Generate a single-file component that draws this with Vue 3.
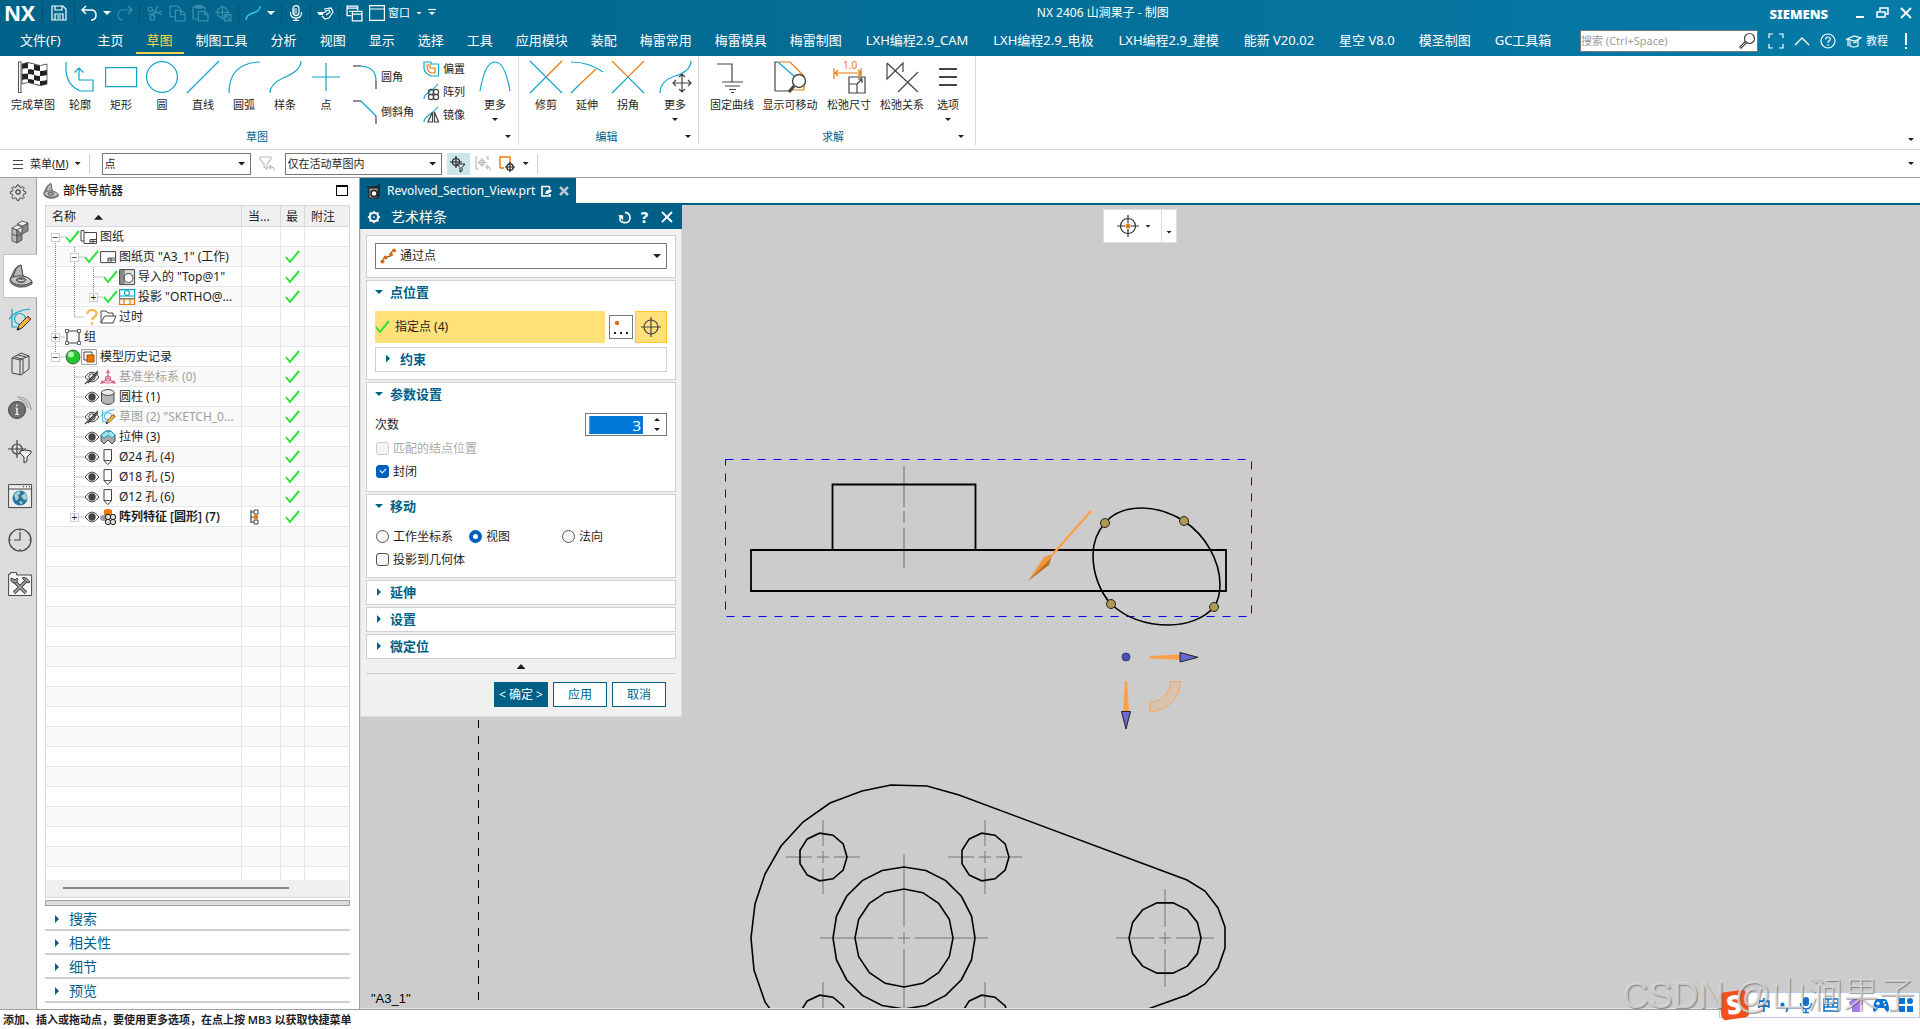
<script setup>
import { h, ref } from 'vue'

const K = '#444'
const C = '#0ea5cb'
const O = '#eb780a'
const s = (c, w = 1.2) => `fill="none" stroke="${c}" stroke-width="${w}"`

const icons = {
  save: `<g ${s('#fff', 1.2)}><path d="M1 1h11l3 3v11H1z"/><path d="M4 1v4h7V1M4 15V9h8v6M6 11h4M6 13h4"/></g>`,
  undo: `<path d="M5 1L1 5l4 4M1 5h9q5 0 5 5t-5 5" ${s('#fff', 1.5)}/>`,
  redo: `<path d="M11 1l4 4-4 4M15 5H6q-5 0-5 5t5 5" ${s('#3a8eae')}/>`,
  cut: `<g ${s('#3a8eae')}><circle cx="4" cy="4" r="2"/><circle cx="6" cy="12" r="2.2"/><path d="M6 5l9 4M15 6L2 9M7 10l4-9"/></g>`,
  copy: `<g ${s('#3a8eae')}><path d="M5 11H1V1h7l3 3"/><path d="M6 5h5l4 3v7H6zM11 5v4h4"/></g>`,
  paste: `<g ${s('#3a8eae')}><path d="M5 13H1V2h11v3M4 2V.7h5V3H4zM6 6h6l3 3v6H6zM12 6v3h3"/></g>`,
  target: `<g ${s('#3a8eae')}><circle cx="7" cy="7" r="5"/><path d="M7 0v14M0 7h14M9 9h6v6H9zM11 11l3 3"/></g>`,
  curve: `<path d="M1 15q0-5 7-7t7-7" ${s('#35c5ee', 1.4)}/>`,
  mic: `<g ${s('#fff')}><rect x="5" y=".6" width="6" height="10" rx="3"/><path d="M2.500 7v1q0 5 5.500 5t5.500-5V7M8 13v2.500M5 15.400h6M5 4h4M5 6h4M5 8h4"/></g>`,
  touch: `<g ${s('#fff')}><path d="M7 4l7-1 2 4-4 6-4 1-3-3M8 6l4-1 1 2-4 3M6 8l4-2"/></g><path d="M0 7h6v3H2z" fill="#fff"/>`,
  wins: `<g ${s('#fff')}><path d="M5 10H1V1h10v4M1 3h10"/><path d="M6 6h9v9H6zM6 8.500h9"/><path d="M3 6h2"/></g>`,
  win: `<path d="M.6.6h14.800v14.800H.6zM.6 4h14.800" ${s('#fff')}/>`,
  caretLine: `<path d="M0 .5h8" ${s('#fff')}/><path d="M1 3h6L4 6z" fill="#fff"/>`,
  restore: `<path d="M4 4V1h8v6H9M1 5h8v5H1zM1 5h8" ${s('#fff', 1.5)}/>`,
  close: `<path d="M1 1l10 10M11 1L1 11" ${s('#fff', 1.8)}/>`,
  full: `<path d="M1 5V1h4M11 1h4v4M15 11v4h-4M5 15H1v-4" ${s('#fff')}/>`,
  up: `<path d="M1 12l7-7 7 7" ${s('#fff', 1.4)}/>`,
  help: `<circle cx="8" cy="8" r="7" ${s('#fff')}/><path d="M5.700 6.500q0-2.500 2.300-2.500t2.300 2q0 1.200-1.300 1.900T8 10M8 11.300v1.400" ${s('#fff')}/>`,
  tutor: `<g ${s('#fff')}><path d="M1 6l7-3 7 2-6 3zM4 8v5q4 2 8 0V7M2 6v7M7 10l4-1"/></g>`,
  mag: `<circle cx="10.500" cy="5.500" r="5" ${s(K)}/><path d="M7 9l-6 6" ${s(K, 3)}/><path d="M6.500 9.500L1.500 14.500" ${s('#ddd', 1)}/>`,
  flag: `<path d="M1.500 1v31M4 1v31M1 1h3.500M1 31.500h3.500" ${s('#555', 1)}/><path d="M5 3q6-3 12 0t13 0v20q-7 3-13 0T5 23z" fill="#222"/><path d="M11 2q3 0 6 1v6q-3-1-6-1zM23 4q4 1 7-1v6q-4 1-7 1zM5 8q3-1 6-.5v5q-3 0-6 .5zM17 9q3 1 6 1v5q-3 0-6-1zM11 13q3 0 6 1v5q-3-1-6-1zM23 15q4 0 7-1v5q-3 1-7 1zM5 19q3-1 6-.5v4q-3 0-6 .5zM17 19q3 1 6 1v4q-3 0-6-1z" fill="#fff"/><path d="M5 3q6-3 12 0t13 0v20q-7 3-13 0T5 23z" ${s('#444', 0.8)}/>`,
  profile: `<path d="M2 1v9q1 14 14 20h13V19H15V7M10.500 11.500L15 7l4.500 4.500" ${s(C)}/>`,
  rect: `<path d="M.6 6.600h31v19H.6z" ${s(C)}/>`,
  circle: `<circle cx="16" cy="16" r="15.400" ${s(C)}/>`,
  line: `<path d="M0 32L32 0" ${s(C)}/>`,
  arc: `<path d="M1 32Q1 2 32 1" ${s(C)}/>`,
  spline: `<path d="M1 32q0-9 13-15 18-7 18-17" ${s(C)}/>`,
  point: `<path d="M16 2v28M2 16h28" ${s(C)}/>`,
  fillet: `<path d="M0 1h8" ${s(K)}/><path d="M8 1q15 1 15 15" ${s(C)}/><path d="M23 16v8" ${s(K)}/>`,
  chamfer: `<path d="M0 1h8" ${s(K)}/><path d="M8 1l15 15" ${s(C)}/><path d="M23 16v8" ${s(K)}/>`,
  offset: `<path d="M1 1h7v2h7.500v12H8Q1 12 1 7z" ${s(C)}/><path d="M4 4h3v3h5v5H8Q4 10 4 4z" ${s(O)}/>`,
  array: `<path d="M1 15Q1 11 6 8t9-8" ${s(C)}/><g ${s(K)}><circle cx="8" cy="8" r="2.600"/><circle cx="13" cy="8" r="2.600"/><circle cx="8" cy="13" r="2.600"/><circle cx="13" cy="13" r="2.600"/></g>`,
  mirror: `<path d="M1 15Q1 11 6 8t9-8" ${s(C)}/><path d="M9.500 5v10H5zM11.500 5v10h4z" ${s(K)}/>`,
  more: `<path d="M1 30Q6 1 16 1t15 29" ${s(C)}/>`,
  trim: `<path d="M0 0l32 32M0 32l16-16" ${s(C)}/><path d="M16 16L32 0" ${s(O)}/>`,
  extend: `<path d="M0 1q18 0 32 10M0 32l8-8" ${s(C)}/><path d="M8 24L25 8" ${s(O)}/>`,
  corner: `<path d="M0 32l16-16 16 16" ${s(C)}/><path d="M0 0l16 16L32 0" ${s(O)}/>`,
  moveCurve: `<path d="M1 32q0-12 15-17Q32 10 32 0" ${s(C)}/><path d="M23 13v18M14 22h18M20 16l3-3 3 3M20 28l3 3 3-3M17 19l-3 3 3 3M29 19l3 3-3 3" ${s(K)}/>`,
  ground: `<path d="M1 3h15v18M6 21h21M9 25h15M13 28.500h7M15 31.500h3" ${s(K)}/>`,
  movable: `<path d="M1 30V1h3M1 30h16" ${s(K)}/><path d="M4 1l17 15" ${s(C)}/><path d="M5 1h11l14 14v14H18" ${s(O)}/><circle cx="25" cy="20" r="6.500" fill="#fff" stroke="${K}" stroke-width="1.400"/><path d="M20 25l-5 6" ${s(K, 3)}/>`,
  relaxDim: `<path d="M1 7v11M28 7v11M2 12h26M5 9l-3 3 3 3M25 9l3 3-3 3" ${s(O)}/><path d="M16 16h16v16H16zM16 23h8v9M24 23l5-5M25 18h4v4" ${s(K)}/>`,
  relaxRel: `<path d="M1 2v16L17 2v9M1 2l31 29M12 31L32 11" ${s(K)}/>`,
  options: `<path d="M7 8h18M7 16h18M7 24h18" ${s(K, 2)}/>`,
  menu: `<path d="M1 2.500h10M1 6.500h10M1 10.500h10" ${s(K)}/>`,
  funnel: `<path d="M1 1h11v2L8 8v5l-3-2V8L1 3z M15 15q1-5-5-4M12 9l-2 2 2 2" ${s('#bbb')}/>`,
  crossFun: `<path d="M6 0v12M0 6h12" ${s('#222')}/><circle cx="6" cy="6" r="3.500" ${s('#222')}/><path d="M7 8h8l-3 3.500V15l-2 1v-4.500z" fill="#cde5ea" stroke="#222"/>`,
  brCross: `<path d="M3 1H1v12h3M11 1h2v3M7 2v9M2.500 6.500h9M15 15q1-5-4-4M13 9l-2 2 2 2" ${s('#bbb')}/><circle cx="7" cy="6.500" r="2.500" ${s('#bbb')}/>`,
  boxCross: `<path d="M1 12V1h10v6M1 12h4" ${s(O, 1.4)}/><circle cx="11" cy="11" r="3.200" ${s('#222', 1.3)}/><path d="M11 6v10M6 11h10" ${s('#222')}/>`,
  gear: `<circle cx="8" cy="8" r="2.200" ${s(K)}/><path d="M7 1h2l.5 2 1.500.6 1.800-1.100 1.400 1.400-1.100 1.800.6 1.500 2 .5v2l-2 .5-.6 1.500 1.100 1.800-1.400 1.400-1.800-1.100-1.500.6-.5 2H7l-.5-2-1.500-.6-1.800 1.100-1.400-1.400 1.100-1.800-.6-1.500-2-.5v-2l2-.5.600-1.500-1.100-1.800 1.400-1.400L5 3.600 6.500 3z" ${s(K, 1)}/>`,
  cubes: `<g stroke="${K}" stroke-width=".8"><path d="M4 8l5-3 5 2-5 3z" fill="#eee"/><path d="M9 4l5-3 6 2-5 3z" fill="#eee"/><path d="M4 8v13l5 2V10z" fill="#bbb"/><path d="M9 10v13l5-3V7l6-4v8l-6 3z" fill="#888"/><path d="M4 14l5 2 5-2" fill="none"/></g>`,
  part: `<g stroke="#444" stroke-width=".9"><path d="M2 13l4-8q3-4 6-4l2 11q8 2 9 6v2q-6 4-13 3-9-2-9-7z" fill="#8a8a8a"/><path d="M4 12l3-7q3-4 5-4l2 11q-3 2-10 0z" fill="#b4b4b4"/><path d="M1 15q5-4 13-3 8 2 9 6-6 4-12 3-8-1-10-6z" fill="#c6c6c6"/><ellipse cx="12" cy="16" rx="4.500" ry="2.300" fill="#777"/><path d="M9 16q3 1.500 6.500 0" stroke="#eee" fill="none"/></g>`,
  sketch: `<path d="M1 11Q8 2 22 1M4 1v18h5" ${s(C)}/><circle cx="12" cy="11" r="5.500" ${s(C)}/><path d="M9 22l2-5L20 8l3 3-9 9z" fill="#f5b93a" stroke="#333" stroke-width="1"/><path d="M18.500 9.500L20 8l3 3-1.500 1.500z" fill="#d5705b"/><path d="M9 22.500l1-3 2 2z" fill="#111"/>`,
  books: `<g ${s(K, 1)}><path d="M4 6l9-5 8 3v13l-8 6-9-2zM4 6l8 2 9-4M12 8v15M15 7v14M7 5l7 2M10 3l8 2" fill="#ddd"/></g>`,
  info: `<circle cx="9" cy="14" r="8.500" fill="#707070" stroke="#444"/><path d="M9 12v6M9 8.500v1.800" ${s('#eee', 1.600)}/><path d="M7.500 12H9M7 18.500h4" ${s('#eee', 1)}/><path d="M11 3q8 1 9 9M9 1q13 0 14 13M12 5.500q5 1 6 6" ${s('#999')}/>`,
  crossFunBig: `<path d="M9 0v18M0 9h18" ${s(K)}/><circle cx="9" cy="9" r="5" ${s(K)}/><path d="M12 11q5-2 11 0v2l-4 4v4l-3 2v-6l-4-4z" fill="#eee" stroke="#333"/>`,
  web: `<path d="M.6.6h23v23H.6z" fill="#eee" stroke="${K}"/><path d="M.6 5h23M15 2.700h1M18 2.700h1M21 2.700h1" ${s(K)}/><circle cx="12" cy="14" r="7.500" fill="#27769a"/><path d="M6 11q3-4 6-4 1 3-2 4l1 3-3 3zM13 12l4-3q3 4 2 6l-3 1zM11 17l4 1-2 3z" fill="#a9cfdd"/>`,
  clock: `<circle cx="12" cy="12" r="11" ${s(K)}/><path d="M12 4v8H6M12 1v2M12 21v2M1 12h2M21 12h2" ${s(K)}/>`,
  tools: `<path d="M.6 2h2V.6h6V3h15v20.500H.6z" fill="#f8f8f8" stroke="${K}"/><path d="M5 8l13 13M18 9L6 21" ${s('#444', 3.500)}/><path d="M5 8l13 13M18 9L6 21" ${s('#aaa', 1.500)}/><path d="M3 6q-1 5 4 5 4-1 2-5l-2 2-2-1zM14 6q4-2 8 4l-2 1-4-3z" fill="#999" stroke="#444"/>`,
  sheets: `<path d="M3 3V1.600H0V12h3" ${s(K, 1)}/><path d="M3 3.500h12.500v11H3z" fill="#fff" stroke="${K}"/><path d="M9 14v-3.500h6M12 10.500V14M9 12.500h6" ${s(K, 1)}/>`,
  sheet: `<path d="M.6 2.600h15v11H.6z" fill="#fff" stroke="${K}"/><path d="M8 13v-4h7M11 9v4M8 11h7" ${s(K, 1)}/>`,
  imported: `<path d="M.6.6h15v15H.6z" fill="#ddd" stroke="${K}"/><path d="M1 1h3v14H1z" fill="#888"/><circle cx="9.500" cy="9" r="4.500" fill="#fff" stroke="${K}"/><path d="M5 1v14" ${s(K, 1)}/>`,
  proj: `<path d="M.6.6h15v9H.6zM1 7h14" ${s(C)}/><circle cx="8" cy="4" r="2.500" ${s(C)}/><path d="M.6 10h15v5.500H.6zM5 10v5M11 10v5" ${s(O)}/>`,
  folder: `<path d="M1 14V2h5l2 2h5v3M1 14L4.500 7H16l-3 7z" fill="#fff" stroke="${K}"/>`,
  group: `<path d="M2 2h12v12H2z" ${s(K)}/><g fill="#fff" stroke="${K}" stroke-width=".8"><path d="M.5.5h3v3h-3zM12.500.5h3v3h-3zM.5 12.500h3v3h-3zM12.500 12.500h3v3h-3z"/></g>`,
  history: `<path d="M.6.6h14.800v14.800H.6z" ${s('#999', 1)}/><path d="M3 3h8v8H3z" fill="#fff" stroke="${K}"/><path d="M6 6h7v7H6z" fill="${O}" stroke="#a04a00"/>`,
  csys: `<g ${s('#d4688c', 1.2)}><path d="M8 3v6L3 13M8 9l5 4M3 13q5 2 10 0"/><circle cx="8" cy="9.500" r="2.500"/></g><g fill="#d4688c"><path d="M6 4l2-4 2 4zM0 15l2-4 3 3zM16 15l-2-4-3 3z"/></g>`,
  cyl: `<path d="M1.500 3.500v9q2 3 6.500 3t6-3v-9z" fill="#b5b5b5" stroke="${K}"/><ellipse cx="7.800" cy="3.500" rx="6.300" ry="2.900" fill="#eee" stroke="${K}"/>`,
  extrude: `<path d="M1 6l5-4h5l4 4v6l-3 3-4-4-4 4-3-3z" fill="#a9a9a9" stroke="${K}"/><path d="M1 6l5-4 2 1 3-1 4 4-3 3-4-3-4 3z" fill="#a5e0ea" stroke="${C}"/>`,
  hole: `<path d="M4 .6h7.500v11H4zM4 11.600l3.800 4 3.700-4" fill="#fff" stroke="${K}"/>`,
  pattern: `<path d="M4 1q4-2 8 0v6H4z" fill="${O}"/><ellipse cx="4" cy="9" rx="4" ry="3" fill="#999"/><g fill="#ddd" stroke="#222"><circle cx="8" cy="8" r="2.700"/><circle cx="13" cy="8" r="2.700"/><circle cx="8" cy="13" r="2.700"/><circle cx="13" cy="13" r="2.700"/></g>`,
  chain: `<path d="M1 1v13M1 3h3M1 8h3M1 13h3" ${s(K)}/><path d="M4 1h4v4H4zM4 11h4v4H4z" fill="#fff" stroke="${K}"/><path d="M4 6h4v4H4z" fill="${O}"/>`,
  check: `<path d="M1 8l4 5L14 2" ${s('#2fe13a', 2)}/>`,
  ask: `<path d="M3.500 5q0-4 4.500-4t4.500 3.500q0 2-2 3.200T8 11M8 13v2.500" ${s('#fbb04c', 2.200)}/>`,
  ball: `<circle cx="8" cy="8" r="7" fill="#20c52c" stroke="#444" stroke-width=".8"/><circle cx="6" cy="5.500" r="3" fill="#a8f5a8"/>`,
  eye: `<path d="M1 8q7-10 14 0-7 10-14 0z" fill="#fff" stroke="${K}"/><circle cx="8" cy="8" r="3.700" fill="#444"/>`,
  eyeOff: `<path d="M1 8q7-10 14 0-7 10-14 0z" ${s(K, 1)}/><circle cx="8" cy="8" r="3.200" ${s(K, 1)}/><path d="M1 15L14 2M4 14l10-10" ${s(K)}/>`,
  tabIcon: `<path d="M2 4h9v10H2z" fill="#9a9a9a" stroke="#222"/><circle cx="7" cy="9.500" r="3" fill="#fff" stroke="#222" stroke-width="1.500"/><path d="M0 3h9l3-2v10l-2 3" ${s('#222', 1.500)}/>`,
  edit: `<path d="M6 1.500H1v9.500h8V9M3 1.500h5l1 2" ${s('#fff', 1.700)}/><path d="M4 9l1-3 4-2 2 2-4 3z" fill="#fff"/>`,
  tabClose: `<path d="M1 1l8 8M9 1L1 9" ${s('#b9c7ce', 2.500)}/>`,
  gearWhite: `<circle cx="8" cy="8" r="4.800" ${s('#fff', 2.400)}/><circle cx="8" cy="8" r="1" fill="#fff"/><path d="M8 1v2M8 13v2M1 8h2M13 8h2M3 3l1.500 1.500M11.500 11.500L13 13M13 3l-1.500 1.500M3 13l1.500-1.500" ${s('#fff', 2)}/>`,
  reset: `<path d="M3 4.500Q0 12 6.500 12.500T13 7Q12.500 2 7.500 1.500" ${s('#fff', 1.700)}/><path d="M0 4.500h5.500V10z" fill="#fff"/>`,
  through: `<path d="M2 14Q3 9 7 9t4-3 3-4" ${s(K, 1)}/><g fill="#dd6c10"><circle cx="2.500" cy="13.500" r="2"/><circle cx="5.500" cy="9.500" r="2"/><circle cx="11" cy="6.500" r="2"/><circle cx="14" cy="2.500" r="2"/></g>`,
  dots: `<circle cx="7" cy="7" r="2.200" fill="#dd6c10"/><path d="M4 17h2M10 17h2M16 17h2" ${s('#222', 2)}/>`,
  cross: `<circle cx="11" cy="11" r="7" ${s(K)}/><path d="M11 1v20M1 11h20" ${s(K)}/>`,
  snap: `<circle cx="11" cy="11" r="7.500" ${s('#333', 1.2)}/><path d="M11 0v8M11 14v8M0 11h8M14 11h8" ${s('#333', 1.2)}/><circle cx="11" cy="11" r="2.500" fill="${O}"/>`,
  imeMic: `<rect x="5" y="0" width="6" height="9" rx="3" fill="#0b74d1"/><path d="M2.500 6q0 6 5.500 6t5.500-6M8 12v4M5 15.500h6" ${s('#0b74d1', 1.600)}/>`,
  imeKey: `<path d="M1 2h14v12H1zM1 6h14M1 10h14M5 2v8M10 2v8" ${s('#0b74d1', 1.600)}/>`,
  imeShirt: `<path d="M1 5l4-3h6l4 3-1 4-2-1v7H4V8L2 9z" fill="#a77bf0"/><circle cx="13" cy="2.500" r="2.500" fill="#f0543a"/>`,
  imeGame: `<path d="M4 2h8q3 1 4 9 0 4-2 4l-3-4H5l-3 4q-2 0-2-4 1-8 4-9z" fill="#0b74d1"/><path d="M3 6.500h4M5 4.500v4M10 5h2M11 8h2" ${s('#fff', 1.300)}/>`,
  imeGrid: `<path d="M1 1h6v6H1zM1 9h6v6H1zM9 9h6v6H9z" fill="#0b74d1"/><circle cx="12" cy="4" r="3" fill="#0b74d1"/>`
}

const Icon = (p) =>
  h('svg', {
    width: p.w || 16,
    height: p.h || p.w || 16,
    viewBox: `0 0 ${p.vw || p.w || 16} ${p.vw || p.h || p.w || 16}`,
    innerHTML: icons[p.n],
    'aria-hidden': 'true',
    style: 'flex:none;overflow:visible;display:block'
  })
Icon.props = ['n', 'w', 'h', 'vw']

const tabs = ['主页', '草图', '制图工具', '分析', '视图', '显示', '选择', '工具', '应用模块', '装配', '梅雷常用', '梅雷模具', '梅雷制图', 'LXH编程2.9_CAM', 'LXH编程2.9_电极', 'LXH编程2.9_建模', '能新 V20.02', '星空 V8.0', '模圣制图', 'GC工具箱']

const sketchTools = [['profile', '轮廓'], ['rect', '矩形'], ['circle', '圆'], ['line', '直线'], ['arc', '圆弧'], ['spline', '样条'], ['point', '点']]
const editTools = [['trim', '修剪'], ['extend', '延伸'], ['corner', '拐角']]
const rail = ['cubes', 'part', 'sketch', 'books', 'info', 'crossFunBig', 'web', 'clock', 'tools']

const rows = [
  { g: 'b', t: '−', st: 'check', ic: 'sheets', x: '图纸' },
  { g: 'vc', t: '−', st: 'check', ic: 'sheet', x: '图纸页 "A3_1" (工作)', ok: 1 },
  { g: 'vvc', st: 'check', ic: 'imported', x: '导入的 "Top@1"', ok: 1 },
  { g: 'vvt', t: '+', st: 'check', ic: 'proj', x: '投影 "ORTHO@...', ok: 1 },
  { g: 'vt', st: 'ask', ic: 'folder', x: '过时' },
  { g: 'c', t: '+', ic: 'group', x: '组' },
  { g: 't', t: '−', st: 'ball', ic: 'history', x: '模型历史记录', ok: 1 },
  { g: '-c', st: 'eyeOff', ic: 'csys', x: '基准坐标系 (0)', dim: 1, ok: 1 },
  { g: '-c', st: 'eye', ic: 'cyl', x: '圆柱 (1)', ok: 1 },
  { g: '-c', st: 'eyeOff', ic: 'sketch', x: '草图 (2) "SKETCH_0...', dim: 1, ok: 1 },
  { g: '-c', st: 'eye', ic: 'extrude', x: '拉伸 (3)', ok: 1 },
  { g: '-c', st: 'eye', ic: 'hole', x: 'Ø24 孔 (4)', ok: 1 },
  { g: '-c', st: 'eye', ic: 'hole', x: 'Ø18 孔 (5)', ok: 1 },
  { g: '-c', st: 'eye', ic: 'hole', x: 'Ø12 孔 (6)', ok: 1 },
  { g: '-t', t: '+', st: 'eye', ic: 'pattern', x: '阵列特征 [圆形] (7)', bold: 1, ok: 1, cur: 1 }
]
const guide = { b: 'M9.500 10V20M9.500 10H19', c: 'M9.500 0V20M9.500 10H19', t: 'M9.500 0V10H19', v: 'M9.500 0V20', '-': '' }

const ring = (cx, cy, r, n) =>
  Array.from({ length: n }, (_, i) => {
    const a = (i * 2 * Math.PI) / n
    return `${(cx + r * Math.cos(a)).toFixed(1)},${(cy - r * Math.sin(a)).toFixed(1)}`
  }).join(' ')
const rings = [
  ring(904, 938, 71, 20), ring(904, 938, 49, 16), ring(1165, 938, 36, 14),
  ring(823, 857, 24, 11), ring(985, 857, 24, 11), ring(823, 1019, 24, 11), ring(985, 1019, 24, 11)
]
const mark = (x, y, l) =>
  `M${x - l} ${y}H${x - 11}M${x - 6} ${y}H${x + 6}M${x + 11} ${y}H${x + l}M${x} ${y - l}V${y - 11}M${x} ${y - 6}V${y + 6}M${x} ${y + 11}V${y + l}`
const marks = [mark(904, 938, 84), mark(1165, 938, 49), mark(823, 857, 37), mark(985, 857, 37), mark(823, 1019, 37), mark(985, 1019, 37)].join('')
const handles = [[1105, 523], [1184, 521], [1214, 607], [1111, 604]]

const degree = ref('3')
const closed = ref(true)
const move = ref('视图')
</script>

<template>
  <div class="app">
    <header class="top">
      <div class="titlebar">
        <strong class="logo">NX</strong>
        <i class="sep"></i>
        <button class="save" aria-label="保存"><Icon n="save" w="16" /></button>
        <i class="sep"></i>
        <button aria-label="撤销"><Icon n="undo" w="16" /></button>
        <i class="caret wide"></i>
        <button aria-label="重做"><Icon n="redo" w="16" /></button>
        <i class="sep"></i>
        <button v-for="n in ['cut', 'copy', 'paste', 'target']" :key="n" :aria-label="n"><Icon :n="n" w="17" vw="16" /></button>
        <i class="sep"></i>
        <button aria-label="曲线"><Icon n="curve" w="16" /></button>
        <i class="caret wide"></i>
        <i class="sep"></i>
        <button aria-label="语音"><Icon n="mic" w="16" /></button>
        <i class="sep"></i>
        <button aria-label="触控"><Icon n="touch" w="16" /></button>
        <i class="sep"></i>
        <button aria-label="层叠"><Icon n="wins" w="17" vw="16" /></button>
        <button class="winbtn"><Icon n="win" w="16" />窗口</button>
        <i class="caret"></i>
        <Icon n="caretLine" w="8" h="8" />
        <div class="title">NX 2406 山涧果子 - 制图</div>
        <strong class="brand">SIEMENS</strong>
        <div class="winctl">
          <button aria-label="最小化"><i class="min"></i></button>
          <button aria-label="还原"><Icon n="restore" w="12" /></button>
          <button aria-label="关闭"><Icon n="close" w="12" /></button>
        </div>
      </div>
      <nav class="tabs">
        <button class="file">文件(F)</button>
        <button v-for="t in tabs" :key="t" :class="{ on: t === '草图', mixed: /[A-Z]/.test(t) }">{{ t }}</button>
        <div class="tools">
          <div class="search"><input type="text" placeholder="搜索 (Ctrl+Space)" aria-label="搜索" /><Icon n="mag" w="16" /></div>
          <button aria-label="全屏"><Icon n="full" w="16" /></button>
          <button aria-label="折叠"><Icon n="up" w="16" /></button>
          <button aria-label="帮助"><Icon n="help" w="16" /></button>
          <button class="tut"><Icon n="tutor" w="16" />教程</button>
          <b class="bang"></b>
        </div>
      </nav>
    </header>

    <section class="ribbon">
      <div class="group">
        <div class="row">
          <button class="big w52"><Icon n="flag" w="32" />完成草图</button>
          <button v-for="t in sketchTools" :key="t[0]" class="big"><Icon :n="t[0]" w="32" />{{ t[1] }}</button>
          <div class="col two">
            <button><Icon n="fillet" w="24" />圆角</button>
            <button><Icon n="chamfer" w="24" />倒斜角</button>
          </div>
          <div class="col three">
            <button><Icon n="offset" w="16" />偏置</button>
            <button><Icon n="array" w="16" />阵列</button>
            <button><Icon n="mirror" w="16" />镜像</button>
          </div>
          <button class="big"><Icon n="more" w="32" />更多<i class="caret dk"></i></button>
        </div>
        <footer>草图<i class="caret dk"></i></footer>
      </div>
      <div class="group">
        <div class="row">
          <button v-for="t in editTools" :key="t[0]" class="big"><Icon :n="t[0]" w="32" />{{ t[1] }}</button>
          <button class="big apart"><Icon n="moveCurve" w="32" />更多<i class="caret dk"></i></button>
        </div>
        <footer>编辑<i class="caret dk"></i></footer>
      </div>
      <div class="group solve">
        <div class="row">
          <button class="big w52"><Icon n="ground" w="32" />固定曲线</button>
          <button class="big w62"><Icon n="movable" w="32" />显示可移动</button>
          <button class="big w54"><Icon n="relaxDim" w="32" /><span class="num">1.0</span>松弛尺寸</button>
          <button class="big w50"><Icon n="relaxRel" w="32" />松弛关系</button>
          <button class="big"><Icon n="options" w="32" />选项<i class="caret dk"></i></button>
        </div>
        <footer>求解<i class="caret dk"></i></footer>
      </div>
      <i class="caret dk end"></i>
    </section>

    <section class="selbar">
      <button class="menu"><Icon n="menu" w="12" />菜单(<u>M</u>)<i class="caret dk"></i></button>
      <i class="vsep"></i>
      <div class="pick s1"><select aria-label="类型过滤器"><option>点</option></select><i class="caret dk wide"></i></div>
      <button class="clear" aria-label="重置过滤器"><Icon n="funnel" w="16" /></button>
      <div class="pick s2"><select aria-label="选择范围"><option>仅在活动草图内</option></select><i class="caret dk wide"></i></div>
      <button class="act" aria-label="捕捉过滤"><Icon n="crossFun" w="16" /></button>
      <button aria-label="恢复捕捉"><Icon n="brCross" w="16" /></button>
      <button aria-label="矩形捕捉"><Icon n="boxCross" w="16" /></button>
      <i class="caret dk"></i>
      <i class="vsep"></i>
      <i class="caret dk end"></i>
    </section>

    <main>
      <aside class="rail">
        <button class="gear" aria-label="设置"><Icon n="gear" w="16" /></button>
        <button v-for="r in rail" :key="r" :class="{ on: r === 'part' }" :aria-label="r"><Icon :n="r" w="24" /></button>
      </aside>

      <aside class="nav">
        <h2><Icon n="part" w="16" vw="24" />部件导航器<button class="max" aria-label="最大化"></button></h2>
        <div class="grid">
          <div class="clip">
            <table>
              <colgroup><col class="c1" /><col class="c2" /><col class="c3" /><col /></colgroup>
              <thead><tr><th>名称<i class="tri"></i></th><th>当...</th><th>最</th><th>附注</th></tr></thead>
              <tbody>
                <tr v-for="r in rows" :key="r.x">
                  <td>
                    <div class="node" :class="{ faded: r.dim, bold: r.bold }">
                      <span v-for="(c, i) in r.g" :key="i" class="lv">
                        <svg width="19" height="20"><path :d="guide[c]" fill="none" stroke="#888" stroke-dasharray="1 1" /></svg>
                        <span v-if="r.t && i === r.g.length - 1" class="tog">{{ r.t }}</span>
                      </span>
                      <Icon v-if="r.st" :n="r.st" w="16" />
                      <Icon :n="r.ic" w="16" :vw="r.ic === 'sketch' ? 24 : 16" />
                      <span class="name">{{ r.x }}</span>
                    </div>
                  </td>
                  <td><Icon v-if="r.cur" n="chain" w="16" /></td>
                  <td><Icon v-if="r.ok" n="check" w="16" /></td>
                  <td></td>
                </tr>
                <tr v-for="n in 20" :key="n"><td></td><td></td><td></td><td></td></tr>
              </tbody>
            </table>
          </div>
          <div class="hscroll"><i></i></div>
        </div>
        <div class="split"></div>
        <button v-for="t in ['搜索', '相关性', '细节', '预览']" :key="t" class="fold"><i class="rt"></i>{{ t }}</button>
      </aside>

      <section class="work">
        <div class="doctabs">
          <button class="doc"><Icon n="tabIcon" w="14" />Revolved_Section_View.prt<Icon n="edit" w="12" /><Icon n="tabClose" w="10" /></button>
        </div>
        <div class="canvas">
          <svg class="draw" width="100%" height="100%">
            <g transform="translate(-360 -205)" fill="none" stroke="#000">
              <path d="M478.500 720V1009" stroke-dasharray="8 8" />
              <rect x="725.500" y="459.500" width="526" height="157" stroke="#00f" stroke-dasharray="8 8" />
              <path d="M904 466V507M904 511V523M904 528V568" stroke="#8c8c8c" stroke-width="1.500" />
              <path d="M832.500 550V484.500H975.500V550M751 550H1226V591H751Z" stroke-width="1.800" />
              <path d="M1091 511L1053 554" stroke="#fba04a" stroke-width="2.500" />
              <path d="M1028 581L1044 557L1053 554L1049 565Z" fill="#f0963c" stroke="none" />
              <path d="M1028 581L1051 558L1049 565Z" fill="#b8702f" stroke="none" />
              <path d="M1093 555C1093 543 1097 532 1105 523C1113 513 1126 508 1142 508C1156 508 1171 513 1184 521C1205 535 1220 560 1220 585C1220 594 1218 601 1214 607C1205 618 1187 625 1169 625C1147 625 1126 618 1111 604C1100 592 1093 574 1093 555Z" stroke-width="1.600" />
              <circle v-for="p in handles" :key="p[0]" :cx="p[0]" :cy="p[1]" r="4.500" fill="#ad9a52" stroke="#222" />
              <circle cx="1126" cy="657" r="4" fill="#4c4cae" stroke="#3b3b8c" />
              <path d="M1150 656L1180 654.500V660L1150 658.500ZM1125 681H1127L1129 711H1123Z" fill="#fba04a" stroke="none" />
              <path d="M1180 652.500L1198 657.300L1180 662ZM1121.500 711.500H1130.500L1126 729Z" fill="#6868d0" stroke="#222" />
              <path d="M1170.500 681.500H1180.500A30.500 30.500 0 0 1 1150 711.500V702A20.500 20.500 0 0 0 1170.500 681.500Z" fill="#e8b98c" fill-opacity=".45" stroke="#f8a662" />
              <path :d="marks" stroke="#777" />
              <g stroke-width="1.600">
                <polygon v-for="(r, i) in rings" :key="i" :points="r" />
                <path d="M959 1081L870 1090L770 1009L765 1002L754 970L751 938L755 904L765 874L781 846L803 822L830 803L862 791L891 785L927 786L959 795L1187 880L1205 891L1218 908L1225 927V948L1218 968L1205 984L1187 995L1148 1009L959 1081" />
              </g>
              <text x="371" y="1003" class="sheetname">"A3_1"</text>
            </g>
          </svg>

          <div class="float"><button aria-label="捕捉点"><Icon n="snap" w="22" /><i class="caret dk"></i></button><button class="drop" aria-label="更多"><i class="caret dk"></i></button></div>

          <form class="dialog" @submit.prevent>
            <h1><Icon n="gearWhite" w="14" vw="16" /><span>艺术样条</span><button type="button" aria-label="重置"><Icon n="reset" w="13" vw="14" /></button><button type="button" class="q">?</button><button type="button" aria-label="关闭"><Icon n="close" w="12" /></button></h1>
            <div class="body">
              <div class="box first">
                <div class="pick type"><Icon n="through" w="16" /><select aria-label="类型"><option>通过点</option></select><i class="caret dk wide"></i></div>
              </div>
              <div class="box">
                <h3><i class="dn"></i>点位置</h3>
                <div class="spec">
                  <div class="field"><Icon n="check" w="16" />指定点 (4)</div>
                  <button type="button" class="ptd" aria-label="点对话框"><Icon n="dots" w="22" /></button>
                  <button type="button" class="ptc" aria-label="点构造器"><Icon n="cross" w="22" /></button>
                </div>
                <div class="sub"><i class="rt"></i>约束</div>
              </div>
              <div class="box params">
                <h3><i class="dn"></i>参数设置</h3>
                <div class="deg"><label for="deg">次数</label><div class="spin"><input id="deg" v-model="degree" type="text" /><span><i class="tup"></i><i class="caret dk"></i></span></div></div>
                <label class="opt off"><input type="checkbox" disabled />匹配的结点位置</label>
                <label class="opt"><input v-model="closed" type="checkbox" />封闭</label>
              </div>
              <div class="box moves">
                <h3><i class="dn"></i>移动</h3>
                <div class="radios">
                  <label v-for="m in ['工作坐标系', '视图', '法向']" :key="m" class="opt"><input v-model="move" type="radio" name="move" :value="m" />{{ m }}</label>
                </div>
                <label class="opt"><input type="checkbox" />投影到几何体</label>
              </div>
              <div v-for="t in ['延伸', '设置', '微定位']" :key="t" class="box shut"><h3><i class="rt"></i>{{ t }}</h3></div>
              <i class="tri fold-up"></i>
              <div class="acts"><button class="ok">&lt; 确定 &gt;</button><button type="button">应用</button><button type="button">取消</button></div>
            </div>
          </form>
        </div>
      </section>
    </main>

    <footer class="status">添加、插入或拖动点，要使用更多选项，在点上按 MB3 以获取快捷菜单</footer>

    <div class="ime"><b class="sg">S</b><b>中</b><b>•,</b><Icon n="imeMic" w="16" /><Icon n="imeKey" w="16" /><Icon n="imeShirt" w="16" /><Icon n="imeGame" w="16" /><Icon n="imeGrid" w="16" /></div>
    <div class="mark">CSDN @山涧果子</div>
  </div>
</template>

<style>
body { margin: 0; overflow: hidden; }
</style>

<style scoped>
.app { position: relative; height: 100vh; display: flex; flex-direction: column; font: 12px/16px "Noto Sans", "Noto Sans CJK SC", sans-serif; color: #1e1e1e; background: #fff; }
.app * { box-sizing: border-box; }
button { font: inherit; color: inherit; background: none; border: 0; padding: 0; margin: 0; white-space: nowrap; }
h1, h2, h3 { margin: 0; font-weight: 400; }
i { flex: none; display: block; }
.caret { width: 6px; height: 3px; background: #fff; clip-path: polygon(0 0, 100% 0, 50% 100%); }
.caret.dk { background: #1e1e1e; }
.caret.wide { width: 8px; height: 4px; }
.end { margin-left: auto; }
.rt { width: 4px; height: 8px; background: #005f87; clip-path: polygon(0 0, 100% 50%, 0 100%); }
.dn { width: 8px; height: 4px; background: #005f87; clip-path: polygon(0 0, 100% 0, 50% 100%); }
.tri { width: 9px; height: 5px; background: #1e1e1e; clip-path: polygon(50% 0, 100% 100%, 0 100%); }
.tup { width: 6px; height: 3px; background: #1e1e1e; clip-path: polygon(50% 0, 100% 100%, 0 100%); }

.top { flex: none; background: linear-gradient(90deg, #006289, #067ba7); color: #fff; }
.titlebar { height: 26px; display: flex; align-items: center; gap: 6px; padding: 0 8px 0 4px; }
.logo { width: 32px; font: bold 21px/26px "Noto Sans", sans-serif; }
.sep { width: 1px; height: 20px; background: #00506f; }
.save { width: 19px; display: flex; justify-content: center; }
.winbtn { display: flex; gap: 3px; font-size: 11px; align-items: center; }
.title { flex: 1; text-align: center; font-size: 12px; }
.brand { font: 900 13px/16px "Noto Sans", sans-serif; padding-top: 2px; }
.winctl { display: flex; gap: 12px; margin-left: 22px; align-items: center; }
.min { width: 8px; height: 2px; background: #fff; margin-top: 8px; }
.tabs { height: 30px; display: flex; gap: 1px; padding-right: 13px; font-size: 13px; }
.tabs > button { padding: 0 11px; height: 28px; line-height: 28px; }
.tabs > .file { padding: 0 25px 0 20px; }
.tabs > .mixed { padding: 0 12px; }
.tabs > .on { color: #ffd04d; box-shadow: 0 -2px #ffcf4b inset; }
.tools { margin-left: auto; display: flex; align-items: center; gap: 10px; height: 30px; }
.search { width: 178px; height: 22px; border: 1px solid #777; background: #fff; display: flex; align-items: center; padding-right: 2px; }
.search input { flex: 1; min-width: 0; border: 0; padding: 0; outline: 0; background: none; font: 11px/16px "Noto Sans", "Noto Sans CJK SC", sans-serif; }
.search input::placeholder { color: #9b9b9b; }
.tut { display: flex; gap: 4px; align-items: center; font-size: 11px; }
.bang { width: 2px; height: 16px; margin-left: 7px; background: linear-gradient(#fff 12px, transparent 12px, transparent 14px, #fff 14px); }

.ribbon { flex: none; height: 94px; display: flex; border-bottom: 1px solid #d9d9d9; align-items: flex-start; padding-right: 6px; font-size: 11px; }
.ribbon .end { margin-top: 82px; }
.group { height: 89px; border-right: 1px solid #d9d9d9; padding: 5px 3px 0 7px; display: flex; flex-direction: column; }
.solve { padding-right: 7px; }
.group .row { display: flex; gap: 1px; height: 72px; align-items: flex-start; }
.big { width: 40px; display: flex; flex-direction: column; align-items: center; gap: 4px; position: relative; }
.big .caret { margin-top: 1px; }
.apart { margin-left: 6px; }
.w50 { width: 50px; } .w52 { width: 52px; } .w54 { width: 54px; } .w62 { width: 62px; }
.num { position: absolute; top: -2px; left: 21px; font-size: 10px; line-height: 12px; color: #eb780a; }
.col { display: flex; flex-direction: column; }
.col button { display: flex; align-items: center; gap: 4px; }
.two { gap: 11px; padding: 4px 8px 0 6px; }
.two button { height: 24px; }
.three { gap: 7px; width: 48px; margin-right: 3px; }
.group footer { position: relative; text-align: center; color: #005f87; line-height: 16px; padding-right: 8px; }
.group footer .caret { position: absolute; right: 4px; top: 6px; }

.selbar { flex: none; height: 28px; display: flex; align-items: center; gap: 8px; padding: 0 6px 0 12px; border-bottom: 1px solid #a0a0a0; font-size: 11px; }
.menu { display: flex; align-items: center; }
.menu svg { margin-right: 6px; }
.menu .caret { margin-left: 6px; }
.clear { width: 18px; }
.vsep { width: 1px; height: 20px; background: #d0d0d0; }
.pick { height: 22px; border: 1px solid #777; display: flex; align-items: center; background: #fff; padding: 0 4px 0 2px; }
.pick select { flex: 1; min-width: 0; height: 20px; appearance: none; border: 0; background: none; font: inherit; color: inherit; padding: 0; outline: 0; }
.s1 { width: 149px; margin-left: 4px; } .s2 { width: 157px; }
.act { width: 23px; height: 22px; margin: 0 -3px; background: #cde5ea; display: flex; align-items: center; justify-content: center; }

main { flex: 1; min-height: 0; display: flex; }
.rail { flex: none; width: 37px; background: #dcdcdc; border-right: 1px solid #a0a0a0; display: flex; flex-direction: column; }
.rail button { height: 44px; display: flex; align-items: center; justify-content: center; padding-left: 3px; }
.rail .gear { height: 32px; padding: 0 0 4px; }
.rail .on { background: #fff; margin: 0 -1px 0 3px; padding-left: 0; border: 1px solid #c2c2c2; border-right: 0; }
.nav { flex: none; width: 323px; border-right: 1px solid #a0a0a0; padding: 0 9px 6px 8px; display: flex; flex-direction: column; }
.nav h2 { height: 27px; padding-bottom: 2px; display: flex; align-items: center; font-size: 12px; gap: 4px; font-weight: 500; }
.nav h2 svg { margin-left: -2px; }
.max { width: 12px; height: 11px; border: 1px solid #000; border-top-width: 2px; margin-left: auto; margin-right: 2px; }
.grid { flex: 1; min-height: 0; border: 1px solid #d9d9d9; display: flex; flex-direction: column; }
.clip { flex: 1; min-height: 0; overflow: hidden; }
table { width: 100%; table-layout: fixed; border-spacing: 0; border-collapse: separate; }
.c1 { width: 196px; } .c2 { width: 39px; } .c3 { width: 24px; }
th { height: 21px; padding: 2px 6px 0; font-weight: 400; text-align: left; background: #f0f0f0; border: 1px solid #d9d9d9; border-width: 0 1px 1px 0; line-height: 18px; white-space: nowrap; }
th:nth-child(3) { padding: 2px 5px 0; }
th .tri { display: inline-block; margin-left: 18px; margin-bottom: 1px; vertical-align: middle; }
td { height: 20px; padding: 0; border: 1px solid #e6e6e6; border-width: 0 1px 1px 0; }
th:last-child, td:last-child { border-right: 0; }
tr:nth-child(even) td { background: #fafafa; }
td:nth-child(3) svg { margin-left: 4px; }
td:nth-child(2) svg { margin-left: 8px; }
.node { height: 19px; display: flex; align-items: center; white-space: nowrap; overflow: hidden; }
.lv { position: relative; width: 19px; height: 20px; flex: none; }
.lv svg { display: block; }
.tog { position: absolute; left: 5px; top: 6px; width: 9px; height: 9px; background: #fff; border: 1px solid #ccc; font: 10px/7px "Liberation Sans", sans-serif; text-align: center; }
.name { margin-left: 3px; }
.faded .name { color: #a0a0a0; }
.bold .name { font-weight: 600; }
.hscroll { flex: none; height: 17px; background: #f0f0f0; padding: 7px 60px 0 17px; }
.hscroll i { height: 2px; background: #888; }
.split { flex: none; height: 6px; margin: 2px 0 1px; background: #dcdcdc; border: 1px solid #a0a0a0; }
.fold { flex: none; height: 24px; display: flex; align-items: center; gap: 10px; padding: 2px 0 0 10px; border-bottom: 2px solid #d0d0d0; color: #005f87; font-size: 14px; }

.work { flex: 1; min-width: 0; display: flex; flex-direction: column; }
.doctabs { height: 27px; border-bottom: 2px solid #005f87; }
.doc { height: 25px; background: #005f87; color: #fff; display: flex; align-items: center; gap: 6px; padding: 0 7px; font-size: 12px; }
.canvas { position: relative; flex: 1; min-height: 0; overflow: hidden; background: #ccc; border-bottom: 1px solid #e0e0e0; }
.draw { display: block; position: absolute; inset: 0; }
.sheetname { font: 13px "Liberation Sans", sans-serif; fill: #000; stroke: none; }
.float { position: absolute; left: 743px; top: 4px; height: 34px; background: #fff; display: flex; border: 1px solid #ddd; }
.float button { display: flex; align-items: center; gap: 6px; padding: 0 10px 0 13px; }
.float .drop { border-left: 1px solid #ddd; padding: 12px 4px 0; }

.dialog { position: absolute; left: 0; top: 0; width: 322px; background: #f0f0f0; border: 1px solid #dcdcdc; border-top: 0; }
.dialog h1 { height: 24px; margin: 0 -1px; background: #005f87; color: #fff; display: flex; align-items: center; gap: 10px; padding: 0 9px 0 7px; font-size: 14px; }
.dialog h1 span { flex: 1; }
.dialog h1 .q { font-weight: 800; font-size: 15px; margin-right: 3px; }
.body { padding: 6px 5px 9px; display: flex; flex-direction: column; gap: 2px; }
.box { background: #fff; border: 1px solid #d0d0d0; padding: 0 8px; }
.first { padding: 7px 8px; height: 43px; }
.type { height: 26px; padding: 0 5px 0 4px; gap: 4px; }
.box h3 { height: 22px; display: flex; align-items: center; gap: 7px; font-size: 13px; font-weight: 700; color: #005f87; }
.spec { display: flex; align-items: center; padding-top: 8px; }
.field { flex: 1; height: 32px; background: #ffe079; display: flex; align-items: center; gap: 4px; color: #1e1e1e; }
.ptd { margin: 0 2px 0 4px; width: 24px; height: 24px; border: 1px solid #777; background: #fff; }
.ptc { width: 32px; height: 32px; border: 1px solid #ffc62e; background: #ffe079; display: flex; align-items: center; justify-content: center; }
.sub { margin: 4px 0 7px; height: 25px; border: 1px solid #d0d0d0; display: flex; align-items: center; gap: 10px; padding: 0 10px 2px; font-size: 13px; font-weight: 700; color: #005f87; }
.params { height: 110px; } .moves { height: 84px; }
.deg { display: flex; align-items: center; justify-content: space-between; margin-top: 8px; height: 23px; }
.spin { width: 82px; height: 23px; border: 1px solid #777; display: flex; align-items: center; padding: 0 6px 0 3px; }
.spin input { flex: 1; min-width: 0; height: 18px; border: 0; border-left: 1px solid #eb780a; padding: 0 2px; background: #0078d7; color: #fff; text-align: right; font: 15px/18px "Noto Sans", sans-serif; outline: 0; }
.spin span { display: flex; flex-direction: column; gap: 7px; margin-left: 11px; }
.opt { display: flex; align-items: center; gap: 4px; height: 23px; }
.params .off { margin-top: 1px; }
.opt input { appearance: none; width: 13px; height: 13px; margin: 0 0 0 1px; border: 1px solid #555; border-radius: 3px; background: #f5f5f5; flex: none; }
.off { color: #aaa; }
.off input { border-color: #ccc; }
.opt input[type="radio"] { border-radius: 50%; }
.opt input[type="radio"]:checked { border: 4px solid #005fb8; background: #fff; }
.opt input[type="checkbox"]:checked { border-color: #005fb8; background: #005fb8; position: relative; }
.opt input[type="checkbox"]:checked::after { content: ""; position: absolute; left: 3px; top: 2px; width: 5px; height: 3px; border: solid #fff; border-width: 0 0 1px 1px; transform: rotate(-45deg); }
.radios { display: grid; grid-template-columns: repeat(3, 93px); margin-top: 8px; }
.shut { height: 25px; }
.shut h3 { padding-left: 2px; gap: 9px; }
.fold-up { align-self: center; margin: 3px 0 2px; }
.acts { border-top: 1px solid #d0d0d0; display: flex; justify-content: flex-end; gap: 5px; padding: 8px 10px 0 0; }
.acts button { width: 54px; height: 25px; border: 1px solid #005f87; background: #fff; color: #005f87; }
.acts .ok { background: #005f87; color: #fff; }

.status { flex: none; height: 20px; border-top: 1px solid #a0a0a0; padding-left: 3px; font-weight: 600; font-size: 11px; line-height: 20px; }
.ime { position: absolute; right: 0; bottom: 11px; height: 26px; display: flex; align-items: center; gap: 9px; padding-right: 5px; background: #fff; border: 1px solid #b8cdea; color: #0b74d1; font-size: 14px; }
.sg { width: 28px; height: 28px; border-radius: 5px; background: #f4511e; color: #fff; transform: rotate(-8deg); text-align: center; font: 900 26px/27px "Noto Sans", sans-serif; }
.mark { position: absolute; right: 5px; bottom: 11px; font: 300 36px/44px "Liberation Sans", "Noto Sans CJK SC", sans-serif; color: rgba(225, 225, 225, .75); text-shadow: 1px 1px 1px rgba(80, 80, 80, .6); white-space: nowrap; }
</style>
